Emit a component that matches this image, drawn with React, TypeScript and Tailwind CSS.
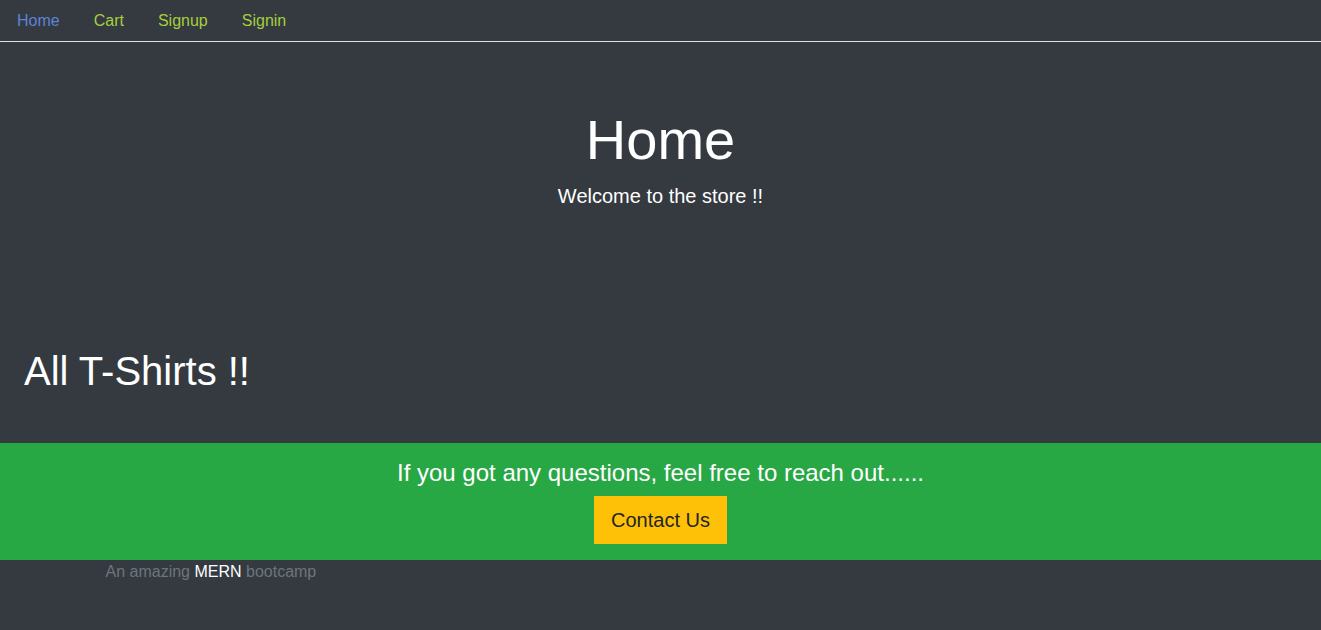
export default function App() {
  const font = { fontFamily: '"Liberation Sans", Arial, sans-serif' };
  return (
    <div className="min-h-screen bg-[#343a40] text-[#212529] flex flex-col" style={font}>
      <ul className="flex border-b border-[#dee2e6] h-[42px]">
        <li className="mb-[-1px]">
          <a className="block px-[17px] py-[9px] text-[16px] leading-[24px] text-[#5d84d6]">Home</a>
        </li>
        <li className="mb-[-1px]">
          <a className="block px-[17px] py-[9px] text-[16px] leading-[24px] text-[#a5cf3c]">Cart</a>
        </li>
        <li className="mb-[-1px]">
          <a className="block px-[17px] py-[9px] text-[16px] leading-[24px] text-[#a5cf3c]">Signup</a>
        </li>
        <li className="mb-[-1px]">
          <a className="block px-[17px] py-[9px] text-[16px] leading-[24px] text-[#a5cf3c]">Signin</a>
        </li>
      </ul>
      <div className="px-[15px]">
        <div className="pt-16 pb-16 px-8 mb-8 text-center text-white">
          <h2 className="text-[56px] leading-[1.2] font-light mb-2">Home</h2>
          <p className="text-[20px] leading-[30px] font-light mb-4">Welcome to the store !!</p>
        </div>
        <div className="p-[24px] pl-[9px]">
          <h1 className="text-[40px] leading-[48px] text-white mb-2">All T-Shirts !!</h1>
        </div>
      </div>
      <footer className="py-4">
        <div className="bg-[#28a745] text-white text-center py-4 flex flex-col items-center">
          <h4 className="text-[24px] leading-[28.8px] mb-2">If you got any questions, feel free to reach out......</h4>
          <button className="bg-[#ffc107] border border-[#ffc107] text-[#212529] text-[20px] leading-[30px] px-4 py-2">
            Contact Us
          </button>
        </div>
        <div className="max-w-[1140px] mx-auto px-[15px]">
          <span className="text-[16px] leading-[24px] text-[#6c757d]">
            An amazing <span className="text-white">MERN</span> bootcamp
          </span>
        </div>
      </footer>
    </div>
  );
}
